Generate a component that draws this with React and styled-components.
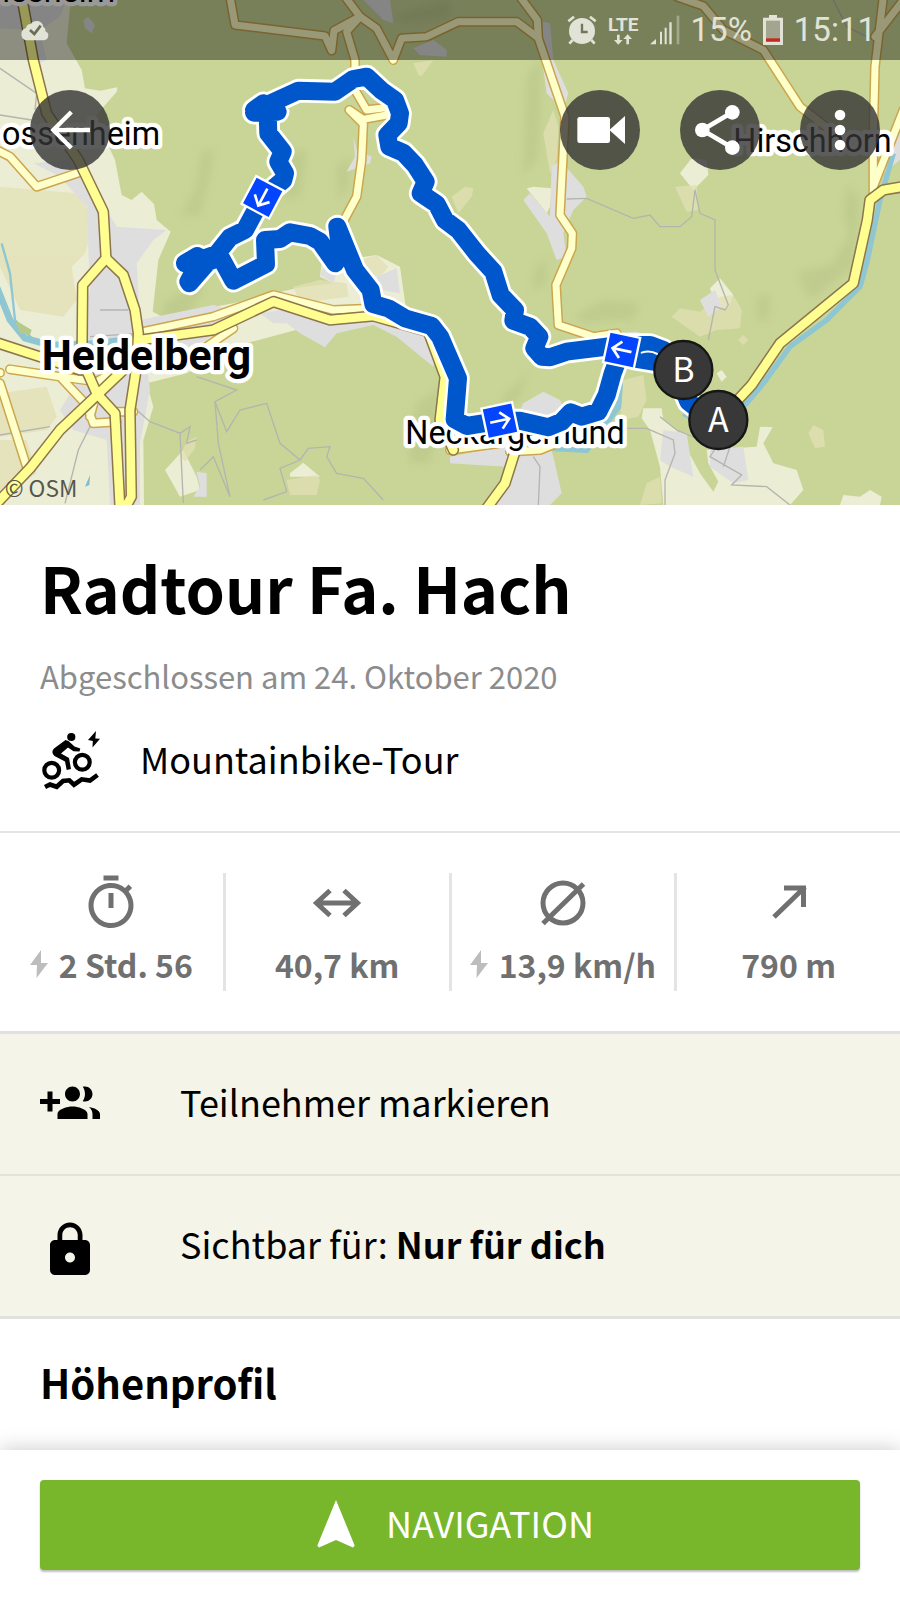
import styled, { createGlobalStyle } from 'styled-components';
import { MdNavigation, MdOutlineTimer } from 'react-icons/md';

const GlobalStyle = createGlobalStyle`
  * {
    box-sizing: border-box;
  }

  body {
    margin: 0;
    background: #fff;
    color: #000;
    font-family: 'Noto Sans CJK JP', 'Noto Sans', sans-serif;
  }

  button {
    font: inherit;
    color: inherit;
    border: 0;
    cursor: pointer;
  }
`;

const Page = styled.div`
  display: flex;
  flex-direction: column;
  min-height: 100vh;
`;

const MapHeader = styled.header`
  position: relative;
  height: 505px;
  overflow: hidden;
`;

const MapCanvas = styled.svg`
  position: absolute;
  inset: 0;
  width: 100%;
  height: 100%;
`;

const StatusBar = styled.div`
  position: relative;
  display: flex;
  align-items: center;
  justify-content: space-between;
  height: 60px;
  padding: 0 24px 0 20px;
  background: rgba(0, 0, 0, 0.4);
  color: #e1e3d6;
  font-family: Roboto, sans-serif;
  font-size: 33px;
  line-height: 40px;
`;

const StatusGroup = styled.div`
  display: flex;
  align-items: center;
  gap: 11px;
`;

const Network = styled.div`
  display: flex;
  flex-direction: column;
  align-items: center;
  font-size: 19px;
  font-weight: 700;
  line-height: 19px;
`;

const Toolbar = styled.nav`
  position: relative;
  display: flex;
  justify-content: space-between;
  padding: 30px 20px 0 30px;
`;

const ToolbarGroup = styled.div`
  display: flex;
  gap: 40px;
`;

const RoundButton = styled.button`
  width: 80px;
  height: 80px;
  padding: 0;
  border-radius: 50%;
  background: rgba(51, 51, 51, 0.8);

  svg {
    display: block;
    width: 100%;
    height: 100%;
  }
`;

const Intro = styled.section`
  padding: 46px 40px 40px;
  border-bottom: 2px solid #e4e4e4;
`;

const Title = styled.h1`
  margin: 0;
  font-size: 63px;
  font-weight: 700;
  line-height: 72px;
`;

const Completed = styled.p`
  margin: 29px 0 31px;
  font-size: 31px;
  line-height: 48px;
  color: #8c8c8c;
`;

const Sport = styled.div`
  display: flex;
  align-items: center;
  gap: 40px;
`;

const Label = styled.span`
  padding-bottom: 6px;
  font-size: 36px;
  line-height: 48px;
`;

const Stats = styled.section`
  display: flex;
  padding: 40px 0;
  border-bottom: 3px solid #e1e2dd;
`;

const StatCell = styled.div`
  flex: 1 1 0;
  display: flex;
  flex-direction: column;
  align-items: center;
  gap: 4px;
  color: #707070;

  & + & {
    border-left: 3px solid #e4e4e4;
  }

  > svg {
    width: 60px;
    height: 60px;
  }
`;

const StatValue = styled.div`
  display: flex;
  align-items: center;
  gap: 11px;
  font-size: 32px;
  font-weight: 700;
  line-height: 54px;
`;

const Option = styled.button`
  display: flex;
  align-items: center;
  gap: 80px;
  width: 100%;
  padding: 40px;
  text-align: left;
  background: #f4f4e8;

  & + & {
    border-top: 2px solid #e2e3da;
  }
`;

const Options = styled.section`
  border-bottom: 3px solid #e1e2dd;
`;

const Profile = styled.section`
  padding: 35px 40px 0;
`;

const Heading = styled.h2`
  margin: 0;
  font-size: 40px;
  font-weight: 700;
  line-height: 56px;
`;

const BottomBar = styled.footer`
  position: sticky;
  bottom: 0;
  margin-top: auto;
  padding: 30px 40px;
  background: #fff;
  box-shadow: 0 0 20px rgba(0, 0, 0, 0.22);
`;

const NavigationButton = styled.button`
  display: flex;
  align-items: center;
  justify-content: center;
  gap: 20px;
  width: 100%;
  height: 90px;
  border-radius: 4px;
  background: #78b62c;
  color: #fff;
  box-shadow: 0 2px 2px rgba(0, 0, 0, 0.25);
`;

const MapLabel = styled.text`
  font-family: Roboto, sans-serif;
  font-size: ${(props) => (props.$city ? 128 : 97)}px;
  font-weight: ${(props) => (props.$city ? 700 : 400)};
  text-anchor: ${(props) => props.$anchor || 'start'};
  stroke: #fff;
  stroke-width: 26px;
  stroke-linejoin: round;
  paint-order: stroke;
`;

const PinLetter = styled.text`
  font-size: 102px;
  fill: #fff;
  text-anchor: middle;
`;

const Copyright = styled.text`
  font-size: 68px;
  fill: #55564c;
`;

const fields = [
  'M0 0H212L200 130L245 210L255 265L300 272L352 262L350 275L285 350L345 480L365 585L395 600L425 575L462 612L470 660L512 695L475 780L458 935L500 958L560 935L700 910L900 862L1000 850L960 830L965 790L1130 765L1200 800L1220 940L1000 960L700 1040L560 1120L440 1150L460 1220L430 1320L432 1515H0Z',
  'M2040 520L2075 475L2120 480L2125 525L2080 570Z',
  'M1580 565L1600 560L1655 565L1650 620L1640 640Z',
  'M2130 865L2160 835L2200 885L2185 925L2150 920Z',
  'M1925 1255L1930 1225L1985 1225L1990 1260L2030 1290L2100 1420L2140 1475L2155 1445L2125 1390L2120 1350L2270 1340L2280 1280L2318 1282L2290 1330L2320 1390L2390 1410L2410 1470L2370 1515H1990L1980 1400L1950 1290Z',
  'M2150 1120L2165 1110L2180 1130L2165 1145Z',
  'M2520 1515L2530 1485L2580 1490L2610 1470L2645 1490L2640 1515Z',
  'M495 1410L550 1350L590 1430L600 1470L540 1490Z',
  'M870 1420L910 1388L960 1430L870 1430Z',
];

const meadows = [
  'M0 560L230 580L285 660L255 760L215 800L230 900L190 950L60 930L0 800Z',
  'M0 1180L140 1160L170 1250L140 1290L0 1310Z',
  'M0 1320L80 1320L110 1420L0 1500Z',
  'M100 790L140 795L160 830L140 855L105 840Z',
  'M880 860L960 840L1040 850L1045 890L900 910Z',
  'M1080 780L1130 765L1165 800L1140 830L1090 820Z',
  'M2015 950L2040 925L2100 935L2160 890L2200 885L2225 930L2220 985L2150 990L2100 1010Z',
  'M2215 1020L2230 1005L2245 1020L2230 1035Z',
  'M1630 400L1660 330L1675 380L1670 480L1650 520Z',
  'M1870 1140L1930 1125L1940 1200L1915 1250L1860 1260Z',
  'M1940 1450L1980 1430L1985 1510L1920 1515Z',
  'M2425 1300L2440 1275L2470 1290L2475 1340L2445 1345Z',
  'M540 1370L560 1325L590 1310L585 1345L555 1385Z',
  'M860 1440L950 1425L960 1440L950 1485L870 1485Z',
  'M1355 590L1395 560L1420 565L1415 590L1375 640Z',
  'M2025 560L2090 555L2095 630L2060 635Z',
  'M1240 190L1300 180L1265 228L1255 225Z',
];

const towns = [
  'M0 20L60 0H200L180 50L120 90L140 180L120 190L80 90L0 85Z',
  'M100 490L200 480L260 530L350 680L500 690L460 720L410 790L420 960L640 915L700 930L620 1020L440 1090L450 1170L420 1330V1515H330L320 1320L220 1290L180 1230L260 1100L230 1000L270 870L260 620L180 530Z',
  'M780 940L900 920L1110 960L1200 955L1310 1040L1300 1100L1190 1010L1120 975L1010 1000L975 1042L900 1000L860 970L820 970Z',
  'M960 825L1000 850L1010 820L970 800Z',
  'M1130 830L1190 805L1200 880L1140 870Z',
  'M1350 1370L1500 1340L1550 1250L1570 1210L1630 1175L1680 1200L1700 1250L1640 1300L1660 1370L1685 1480L1650 1515H1480L1520 1400L1350 1390Z',
  'M1090 0H1170L1180 70L1150 60Z',
  'M1240 145L1300 120L1340 150V170L1260 165Z',
  'M1610 60L1650 70L1660 180L1705 280L1690 330L1640 280Z',
  'M1570 600L1590 580L1650 650L1655 500L1680 480L1750 560L1760 590L1720 630L1690 700L1700 770L1670 780L1640 700Z',
  'M2100 900L2145 870L2165 920L2125 950Z',
  'M1990 1290L2060 1300L2080 1430L2010 1400L1980 1380Z',
  'M2130 1350L2230 1340L2245 1440L2200 1450L2130 1400Z',
  'M2630 420L2700 390V480L2650 520Z',
  'M250 60L265 50L285 75L275 100L255 85Z',
  'M1060 410L1070 450L1115 470L1110 490L1040 515L1065 470Z',
  'M590 1415L620 1420V1490H580L600 1460Z',
  'M1840 1000L1910 995L1950 1010L1860 1030Z',
];

const shades = [
  'M605 455L640 445L635 500L600 645L540 650L590 560Z',
  'M500 900L620 850L560 950L480 960Z',
  'M1010 500L1050 470L1045 560L1015 600Z',
  'M1250 1210L1330 1160L1310 1290L1290 1390L1225 1390Z',
  'M1500 1200L1570 1130L1590 1100L1560 1190L1520 1220Z',
  'M1720 950L1810 900L1920 910L1900 960L1810 960L1760 970Z',
  'M1580 230L1625 170L1620 390L1610 480L1570 530Z',
  'M2270 890L2310 880L2305 960L2270 965Z',
  'M2390 820L2500 790L2550 700L2530 650L2540 550L2580 600L2560 800L2430 900Z',
  'M1640 780L1605 800L1595 870L1635 860Z',
  'M1170 50L1350 0V50L1210 70Z',
  'M870 460L920 450L900 590L850 600Z',
];

const trails = [
  'M0 205L110 280L105 330M0 345L95 360',
  'M0 1305L150 1280M270 1280L235 1350L195 1510',
  'M300 930H385M270 1010L420 1000',
  'M410 1230L450 1265L540 1300L550 1510M540 1300L570 1280L560 1330L590 1320',
  'M590 1130L710 1170L645 1205L655 1330L690 1490M645 1205L680 1295L720 1230L800 1210L840 1330L900 1380L925 1345L990 1340L980 1370L1010 1420L1090 1435L1150 1500M690 1490L640 1370L600 1410M900 1380L840 1405L860 1475L790 1500',
  'M1700 597L1760 595L1900 655L1950 645L1980 680L2040 680L2075 650L2085 570L2100 640L2145 660V810L2185 915L2175 930L2145 920L2125 1020',
  'M1880 1285L1940 1285L2020 1320L2025 1360L1995 1440V1515M1980 1250L2030 1290L2150 1340L2130 1370L2225 1425L2195 1455L2300 1460L2370 1515',
  'M1600 1370L1620 1400L1615 1515M2190 1340L2170 1400',
  'M2500 0L2540 80L2620 120',
];

const minorRoads = [
  'M690 -10L705 75L975 108L995 152L1002 92L1080 50L1130 85L1180 180L1205 115L1280 110L1375 65L1550 65L1610 110',
  'M1035 -10L1080 50L1040 95L1065 180L1065 270L1100 330L1180 320L1160 345L1090 358L1048 330L1090 372L1085 480L1070 590L1030 665',
  'M1560 -10L1612 60L1615 115L1695 350L1680 645L1717 700L1715 745L1668 855L1675 975L1780 1010L1850 1000',
  'M2030 -10L2110 18L2170 90L2290 150L2400 320L2490 390',
  'M2650 -10L2625 200L2620 400V580M2710 0L2625 110M2710 330L2620 560',
  'M-10 450L30 470L110 560L245 515',
  'M30 1108L180 1130L290 1145L350 1110M0 1118L-10 1118M0 1150L80 1400M180 1130L260 1215L280 1270L350 1265M350 1235H400M300 1140L270 1250',
  'M590 1060L700 985M430 995L640 950L820 885L1000 930L1120 925',
  'M1350 1350L1500 1330M1530 1355L1620 1350L1670 1330',
];

const mainRoads = [
  'M65 -10L100 180L140 340L235 480L310 635L318 775L248 855L246 1080L290 1180L345 1240L360 1525',
  'M318 775L370 825L405 930L415 1000L410 1100L390 1230L394 1490L380 1515',
  'M-10 1028L150 1080L240 1110',
  'M370 1110L270 1205L180 1290L90 1405L-10 1510',
  'M420 1020L640 990L820 905L990 960L1120 948L1285 995L1335 1130L1320 1260L1360 1350',
  'M1545 1355L1515 1450L1460 1525',
  'M2710 560L2650 570L2610 600L2602 660L2580 760L2560 850L2340 1030L2255 1155L2130 1290',
];

const route =
  'M2135 1260L2065 1205L2030 1120L2010 1090L1960 1085L1900 1075L1860 1062L1838 1120L1820 1185L1795 1235L1745 1250L1712 1237L1685 1265L1645 1282L1560 1262L1500 1262L1400 1278L1364 1258L1374 1135L1320 1010L1295 978L1215 955L1165 925L1120 912L1112 870L1065 810L1012 680L1022 760L1006 790L960 725L930 708L870 697L840 717L795 720L798 792L700 842L662 772L625 785L568 850L610 800L555 790L592 768L600 800L565 845L600 780L650 762L690 712L735 690L788 592L850 540L855 520L835 485L848 455L805 400L803 340L833 335L762 338L790 310L762 330L790 320L895 272L1005 275L1060 237L1100 230L1145 272L1185 300L1200 340L1196 370L1162 405L1168 440L1210 458L1245 495L1277 545L1262 580L1310 612L1335 660L1375 690L1430 760L1480 815L1502 885L1545 930L1540 962L1590 980L1618 1010L1603 1045L1625 1070L1650 1072L1700 1055L1860 1035L1950 1035L1990 1050L2030 1090';

const directions = [
  { x: 788, y: 592, turn: 28, arrow: 90 },
  { x: 1865, y: 1050, turn: 12, arrow: 180 },
  { x: 1500, y: 1262, turn: -12, arrow: 0 },
];

const pins = [
  { x: 2050, y: 1110, letter: 'B' },
  { x: 2155, y: 1260, letter: 'A' },
];

const Shapes = ({ paths, ...rest }) => (
  <g {...rest}>
    {paths.map((d) => (
      <path key={d} d={d} />
    ))}
  </g>
);

const Roads = ({ paths, casing, fill, width }) => (
  <>
    <Shapes paths={paths} stroke={casing} strokeWidth={width + 9} />
    <Shapes paths={paths} stroke={fill} strokeWidth={width} />
  </>
);

const TourMap = () => (
  <MapCanvas viewBox='0 0 2700 1515' preserveAspectRatio='xMidYMid slice'>
    <defs>
      <filter id='soft'>
        <feGaussianBlur stdDeviation='12' />
      </filter>
    </defs>
    <rect width='2700' height='1515' fill='#c9d597' />
    <Shapes paths={shades} fill='#b4c284' opacity='.5' filter='url(#soft)' />
    <Shapes paths={fields} fill='#ecedd5' />
    <Shapes paths={meadows} fill='#e2e0b4' opacity='.75' />
    <Shapes paths={towns} fill='#dfdedf' />
    <Shapes paths={trails} fill='none' stroke='#b3b5ae' strokeWidth='4' />
    <g fill='none' stroke='#8ec6d3' strokeLinejoin='round'>
      <path
        d='M-10 860L30 960L75 1015L150 1035L300 1030L430 1010'
        strokeWidth='20'
      />
      <path d='M5 730L30 820L45 960L100 1020' strokeWidth='7' />
      <path
        d='M2680 460L2640 600L2600 790L2580 860L2480 960L2370 1040L2290 1150L2240 1210L2140 1290L2050 1240'
        strokeWidth='16'
      />
      <path d='M1860 1150L1855 1220L1810 1280L1760 1350L1660 1345' strokeWidth='18' />
    </g>
    <path d='M45 960L95 990L90 1005L60 1000Z' fill='#b5c98b' />
    <path d='M270 1425L268 1455L255 1460Z' fill='#78bdd0' />
    <g fill='none' strokeLinejoin='round' strokeLinecap='round'>
      <Roads paths={minorRoads} casing='#cba64f' fill='#ffffc9' width={21} />
      <Roads paths={mainRoads} casing='#8d754c' fill='#ffff91' width={26} />
    </g>
    <MapLabel x='345' y='7' $anchor='end'>
      riesheim
    </MapLabel>
    <MapLabel x='480' y='436' $anchor='end'>
      ossenheim
    </MapLabel>
    <MapLabel x='2200' y='456'>
      Hirschhorn
    </MapLabel>
    <MapLabel x='125' y='1110' $city>
      Heidelberg
    </MapLabel>
    <MapLabel x='1874' y='1332' $anchor='end'>
      Neckargemünd
    </MapLabel>
    <Copyright x='14' y='1490'>
      © OSM
    </Copyright>
    <g fill='none' strokeLinejoin='round' strokeLinecap='round'>
      <path d={route} stroke='#fff' strokeWidth='71' />
      <path d={route} stroke='#0057cc' strokeWidth='54' />
      <path d='M1925 1058Q1950 1050 1972 1062' stroke='#fff' strokeWidth='6' />
    </g>
    {directions.map(({ x, y, turn, arrow }) => (
      <g key={x} transform={`translate(${x} ${y}) rotate(${turn})`}>
        <rect
          x='-47'
          y='-47'
          width='94'
          height='94'
          fill='#0345fd'
          stroke='#fff'
          strokeWidth='7'
        />
        <path
          d='M-30 0H27M3 -25L28 0L3 25'
          fill='none'
          stroke='#fff'
          strokeWidth='8'
          transform={`rotate(${arrow})`}
        />
      </g>
    ))}
    {pins.map(({ x, y, letter }) => (
      <g key={letter}>
        <circle cx={x} cy={y} r='87' fill='#383838' stroke='#161616' strokeWidth='7' />
        <PinLetter x={x} y={y + 37}>
          {letter}
        </PinLetter>
      </g>
    ))}
  </MapCanvas>
);

const CloudIcon = () => (
  <svg width='30' height='22' viewBox='0 0 90 66' fill='none'>
    <path
      d='M20 64a19 19 0 0 1-2-37a15 15 0 0 1 14-12a21 21 0 0 1 38 8a14 14 0 0 1 6 14a14 14 0 0 1-4 27Z'
      fill='#e1e3d6'
    />
    <path d='M30 33L43 45L62 20' stroke='#6b6d52' strokeWidth='8' />
  </svg>
);

const AlarmIcon = () => (
  <svg width='30' height='30' viewBox='0 0 90 90' fill='none' stroke='#e1e3d6'>
    <circle cx='45' cy='48' r='39' fill='#e1e3d6' stroke='none' />
    <path d='M4 19L21 5M69 5L86 19M17 75L7 86M73 75L83 86' strokeWidth='8' />
    <path d='M45 26V51H62' stroke='#74765b' strokeWidth='7' />
  </svg>
);

const DataArrows = () => (
  <svg width='18' height='11' viewBox='0 0 54 33' fill='#e1e3d6'>
    <path d='M9 2H17V18H26L13 32L0 18H9ZM37 31H45V15H54L41 1L28 15H37Z' />
  </svg>
);

const SignalIcon = () => (
  <svg width='30' height='30' viewBox='0 0 90 90' fill='#e1e3d6'>
    <path d='M0 88L18 72V88ZM30 50H36V88H30ZM44 38H50V88H44ZM58 22H65V88H58Z' />
    <path d='M80 2H88V88H80Z' opacity='.4' />
  </svg>
);

const BatteryIcon = () => (
  <svg width='20' height='30' viewBox='0 0 60 90'>
    <path d='M18 0H42V8H60V90H0V8H18Z' fill='#e1e3d6' />
    <path d='M9 17H51V80H9Z' fill='#a3a591' />
    <path d='M9 70H51V80H9Z' fill='#c5281c' />
  </svg>
);

const BackIcon = () => (
  <svg viewBox='0 0 240 240' fill='none' stroke='#fff' strokeWidth='13'>
    <path d='M70 120H180M124 66L70 120L124 174' />
  </svg>
);

const VideoIcon = () => (
  <svg viewBox='0 0 240 240' fill='#fff'>
    <rect x='52' y='81' width='98' height='78' rx='7' />
    <path d='M148 120L195 78V162Z' />
  </svg>
);

const ShareIcon = () => (
  <svg viewBox='0 0 240 240' fill='#fff'>
    <path d='M157 67L67 120L157 173' fill='none' stroke='#fff' strokeWidth='14' />
    <circle cx='157' cy='67' r='22' />
    <circle cx='67' cy='120' r='22' />
    <circle cx='157' cy='173' r='22' />
  </svg>
);

const MoreIcon = () => (
  <svg viewBox='0 0 240 240' fill='#fff'>
    <circle cx='120' cy='75' r='16' />
    <circle cx='120' cy='120' r='16' />
    <circle cx='120' cy='165' r='16' />
  </svg>
);

const BikeIcon = () => (
  <svg width='60' height='60' viewBox='-1 0 60 60' fill='none' stroke='#000'>
    <circle cx='10.7' cy='39.3' r='7.400' strokeWidth='4.200' />
    <circle cx='41.3' cy='31.3' r='7.400' strokeWidth='4.200' />
    <circle cx='30.3' cy='6' r='4.100' fill='#000' stroke='none' />
    <path
      d='M24.500 9L13 17.500Q9.500 21 13.500 25L24 30.500L25.700 39L30 38L28 27L20 22.500L27 16.500L32.500 20.200L38.500 20.500L39.300 17.500L33.500 15.500L27.500 10Z'
      fill='#000'
      stroke='none'
    />
    <path
      d='M55 0L47 9L51.800 10L51.500 16.500L59 7.700L54.300 7.500Z'
      fill='#000'
      stroke='none'
    />
    <path
      d='M4 56L9 53.500L15.700 55.800L22 50L28.300 49.300L33 53.700L40.700 48.300L49 49.500L56.500 44'
      strokeWidth='4.600'
    />
  </svg>
);

const BoltIcon = () => (
  <svg width='18' height='28' viewBox='0 0 18 28' fill='#bdbdbd'>
    <path d='M11 0L0 15H7L6.500 28L18 13H11Z' />
  </svg>
);

const DistanceIcon = () => (
  <svg viewBox='0 0 60 60' fill='none' stroke='currentColor' strokeWidth='5'>
    <path d='M9 30H51M23 17.500L9.500 30L23 42.500M37 17.500L50.500 30L37 42.500' />
  </svg>
);

const AverageIcon = () => (
  <svg viewBox='0 0 60 60' fill='none' stroke='currentColor' strokeWidth='5'>
    <circle cx='30' cy='30' r='20' />
    <path d='M10 50.500L50.500 11' />
  </svg>
);

const AscentIcon = () => (
  <svg viewBox='0 0 60 60' fill='none' stroke='currentColor' strokeWidth='5'>
    <path d='M15 44L46 14M25 15H44.500V34' />
  </svg>
);

const AddPeopleIcon = () => (
  <svg width='60' height='60' viewBox='0 0 24 24'>
    <path d='M8 10H5V7H3v3H0v2h3v3h2v-3h3v-2zm10 1c1.66 0 2.99-1.34 2.99-3S19.66 5 18 5c-.32 0-.63.05-.91.14.57.81.9 1.79.9 2.86s-.34 2.04-.9 2.86c.28.09.59.14.91.14zm-5 0c1.66 0 2.99-1.34 2.99-3S14.66 5 13 5c-1.66 0-3 1.34-3 3s1.34 3 3 3zm6.62 2.16c.83.73 1.38 1.66 1.38 2.84v2h3v-2c0-1.54-2.37-2.49-4.38-2.84zM13 13c-2 0-6 1-6 3v2h12v-2c0-2-4-3-6-3z' />
  </svg>
);

const LockIcon = () => (
  <svg width='60' height='60' viewBox='0 -1.600 24 24'>
    <path d='M18 8h-1V6c0-2.760-2.240-5-5-5S7 3.240 7 6v2H6c-1.100 0-2 .9-2 2v10c0 1.100.9 2 2 2h12c1.100 0 2-.9 2-2V10c0-1.100-.9-2-2-2zm-6 9c-1.100 0-2-.9-2-2s.9-2 2-2 2 .9 2 2-.9 2-2 2zm3.100-9H8.900V6c0-1.710 1.390-3.100 3.100-3.100 1.710 0 3.100 1.390 3.100 3.100v2z' />
  </svg>
);

const Stat = ({ icon, value, electric }) => (
  <StatCell>
    {icon}
    <StatValue>
      {electric && <BoltIcon />}
      <span>{value}</span>
    </StatValue>
  </StatCell>
);

const App = () => {
  return (
    <Page>
      <GlobalStyle />
      <MapHeader>
        <TourMap />
        <StatusBar>
          <CloudIcon />
          <StatusGroup>
            <AlarmIcon />
            <Network>
              LTE
              <DataArrows />
            </Network>
            <SignalIcon />
            <span>15%</span>
            <BatteryIcon />
            <span>15:11</span>
          </StatusGroup>
        </StatusBar>
        <Toolbar>
          <RoundButton aria-label='Zurück'>
            <BackIcon />
          </RoundButton>
          <ToolbarGroup>
            <RoundButton aria-label='Video'>
              <VideoIcon />
            </RoundButton>
            <RoundButton aria-label='Teilen'>
              <ShareIcon />
            </RoundButton>
            <RoundButton aria-label='Mehr'>
              <MoreIcon />
            </RoundButton>
          </ToolbarGroup>
        </Toolbar>
      </MapHeader>
      <main>
        <Intro>
          <Title>Radtour Fa. Hach</Title>
          <Completed>Abgeschlossen am 24. Oktober 2020</Completed>
          <Sport>
            <BikeIcon />
            <Label>Mountainbike-Tour</Label>
          </Sport>
        </Intro>
        <Stats>
          <Stat icon={<MdOutlineTimer />} value='2 Std. 56' electric />
          <Stat icon={<DistanceIcon />} value='40,7 km' />
          <Stat icon={<AverageIcon />} value='13,9 km/h' electric />
          <Stat icon={<AscentIcon />} value='790 m' />
        </Stats>
        <Options>
          <Option>
            <AddPeopleIcon />
            <Label>Teilnehmer markieren</Label>
          </Option>
          <Option>
            <LockIcon />
            <Label>
              Sichtbar für: <strong>Nur für dich</strong>
            </Label>
          </Option>
        </Options>
        <Profile>
          <Heading>Höhenprofil</Heading>
        </Profile>
      </main>
      <BottomBar>
        <NavigationButton>
          <MdNavigation size={60} />
          <Label>NAVIGATION</Label>
        </NavigationButton>
      </BottomBar>
    </Page>
  );
};

export default App;
